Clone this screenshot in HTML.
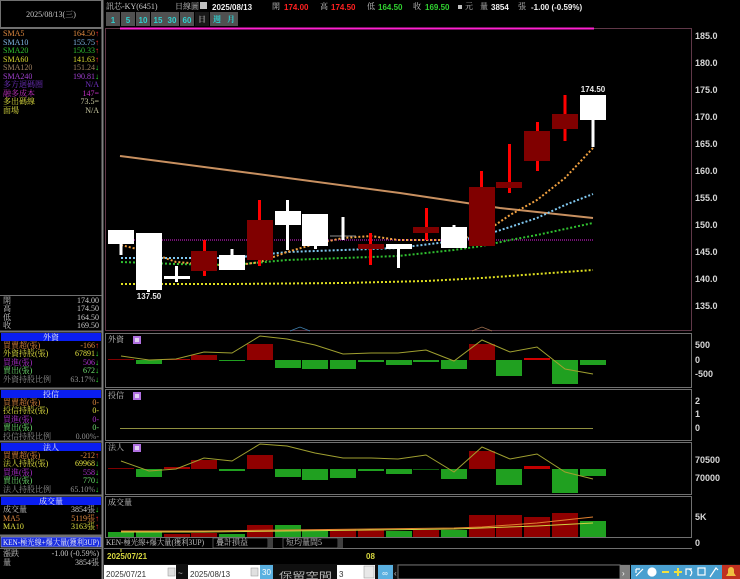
<!DOCTYPE html>
<html><head><meta charset="utf-8"><style>
html,body{margin:0;padding:0;background:#000;width:740px;height:579px;overflow:hidden}
svg{display:block}
text{font-family:"Liberation Sans","Noto Sans CJK TC",sans-serif;font-size:8px}
.s{font-family:"Liberation Serif","Noto Serif CJK SC",serif;font-size:8px}
.ax{fill:#d8d8d8;font-size:9px;font-weight:bold}
</style></head><body>
<svg width="740" height="579" viewBox="0 0 740 579" xmlns="http://www.w3.org/2000/svg">
<rect width="740" height="579" fill="#000"/>
<rect x="0.5" y="0.5" width="101" height="27" fill="none" stroke="#707070"/>
<text x="51" y="17" text-anchor="middle" class="s" fill="#c8c8c8">2025/08/13(三)</text>
<line x1="102.5" y1="0" x2="102.5" y2="579" stroke="#808080" stroke-width="2"/>
<line x1="0" y1="28.5" x2="102" y2="28.5" stroke="#707070"/>
<g class="s">
<text x="3" y="36" fill="#e08a40" class="s">SMA5</text><text x="99" y="36" text-anchor="end" fill="#e08a40" class="s">164.50<tspan fill="#ff3030">↑</tspan></text>
<text x="3" y="45" fill="#80b8e8" class="s">SMA10</text><text x="99" y="45" text-anchor="end" fill="#80b8e8" class="s">155.75<tspan fill="#ff3030">↑</tspan></text>
<text x="3" y="53" fill="#30c030" class="s">SMA20</text><text x="99" y="53" text-anchor="end" fill="#30c030" class="s">150.33<tspan fill="#ff3030">↑</tspan></text>
<text x="3" y="62" fill="#d8d830" class="s">SMA60</text><text x="99" y="62" text-anchor="end" fill="#d8d830" class="s">141.63<tspan fill="#ff3030">↑</tspan></text>
<text x="3" y="70" fill="#a08060" class="s">SMA120</text><text x="99" y="70" text-anchor="end" fill="#a08060" class="s">151.24<tspan fill="#30e030">↓</tspan></text>
<text x="3" y="79" fill="#a040d0" class="s">SMA240</text><text x="99" y="79" text-anchor="end" fill="#a040d0" class="s">190.81<tspan fill="#30e030">↓</tspan></text>
<text x="3" y="87" fill="#7030c0" class="s">多方迴碼圈</text><text x="99" y="87" text-anchor="end" fill="#7030c0" class="s">N/A</text>
<text x="3" y="96" fill="#c030c0" class="s">融多成本</text><text x="99" y="96" text-anchor="end" fill="#c030c0" class="s">147=</text>
<text x="3" y="104" fill="#e0e040" class="s">多出碼線</text><text x="99" y="104" text-anchor="end" fill="#c8c8a0" class="s">73.5=</text>
<text x="3" y="113" fill="#e0e040" class="s">面場</text><text x="99" y="113" text-anchor="end" fill="#c8c8a0" class="s">N/A</text>
</g>
<line x1="0" y1="295.5" x2="102" y2="295.5" stroke="#707070"/>
<text x="3" y="303" fill="#c8c8c8" class="s">開</text><text x="99" y="303" text-anchor="end" fill="#c8c8c8" class="s">174.00</text>
<text x="3" y="311" fill="#c8c8c8" class="s">高</text><text x="99" y="311" text-anchor="end" fill="#c8c8c8" class="s">174.50</text>
<text x="3" y="320" fill="#c8c8c8" class="s">低</text><text x="99" y="320" text-anchor="end" fill="#c8c8c8" class="s">164.50</text>
<text x="3" y="328" fill="#c8c8c8" class="s">收</text><text x="99" y="328" text-anchor="end" fill="#c8c8c8" class="s">169.50</text>
<line x1="0" y1="331.5" x2="102" y2="331.5" stroke="#707070" stroke-width="2"/>
<rect x="1" y="333" width="100" height="8" fill="#0a1ef0"/>
<text x="51" y="340" text-anchor="middle" fill="#f0f0f0" class="s">外資</text>
<text x="3" y="348" fill="#e08a40" class="s">買賣超(張)</text><text x="99" y="348" text-anchor="end" fill="#e08a40" class="s">-166<tspan fill="#ff3030">↑</tspan></text>
<text x="3" y="356" fill="#e0e040" class="s">外資持股(張)</text><text x="99" y="356" text-anchor="end" fill="#e0e040" class="s">67891<tspan fill="#30e030">↓</tspan></text>
<text x="3" y="365" fill="#b030d0" class="s">買進(張)</text><text x="99" y="365" text-anchor="end" fill="#b030d0" class="s">506<tspan fill="#30e030">↓</tspan></text>
<text x="3" y="373" fill="#70e070" class="s">賣出(張)</text><text x="99" y="373" text-anchor="end" fill="#70e070" class="s">672<tspan fill="#30e030">↓</tspan></text>
<text x="3" y="382" fill="#909090" class="s">外資持股比例</text><text x="99" y="382" text-anchor="end" fill="#909090" class="s">63.17%<tspan fill="#30e030">↓</tspan></text>
<line x1="0" y1="388.5" x2="102" y2="388.5" stroke="#707070" stroke-width="2"/>
<rect x="1" y="390" width="100" height="8" fill="#0a1ef0"/>
<text x="51" y="397" text-anchor="middle" fill="#f0f0f0" class="s">投信</text>
<text x="3" y="405" fill="#e08a40" class="s">買賣超(張)</text><text x="99" y="405" text-anchor="end" fill="#e08a40" class="s">0-</text>
<text x="3" y="413" fill="#e0e040" class="s">投信持股(張)</text><text x="99" y="413" text-anchor="end" fill="#e0e040" class="s">0-</text>
<text x="3" y="422" fill="#b030d0" class="s">買進(張)</text><text x="99" y="422" text-anchor="end" fill="#b030d0" class="s">0-</text>
<text x="3" y="430" fill="#70e070" class="s">賣出(張)</text><text x="99" y="430" text-anchor="end" fill="#70e070" class="s">0-</text>
<text x="3" y="439" fill="#909090" class="s">投信持股比例</text><text x="99" y="439" text-anchor="end" fill="#909090" class="s">0.00%-</text>
<line x1="0" y1="441.5" x2="102" y2="441.5" stroke="#707070" stroke-width="2"/>
<rect x="1" y="443" width="100" height="8" fill="#0a1ef0"/>
<text x="51" y="450" text-anchor="middle" fill="#f0f0f0" class="s">法人</text>
<text x="3" y="458" fill="#e08a40" class="s">買賣超(張)</text><text x="99" y="458" text-anchor="end" fill="#e08a40" class="s">-212<tspan fill="#ff3030">↑</tspan></text>
<text x="3" y="466" fill="#e0e040" class="s">法人持股(張)</text><text x="99" y="466" text-anchor="end" fill="#e0e040" class="s">69968<tspan fill="#30e030">↓</tspan></text>
<text x="3" y="475" fill="#b030d0" class="s">買進(張)</text><text x="99" y="475" text-anchor="end" fill="#b030d0" class="s">558<tspan fill="#30e030">↓</tspan></text>
<text x="3" y="483" fill="#70e070" class="s">賣出(張)</text><text x="99" y="483" text-anchor="end" fill="#70e070" class="s">770<tspan fill="#30e030">↓</tspan></text>
<text x="3" y="492" fill="#909090" class="s">法人持股比例</text><text x="99" y="492" text-anchor="end" fill="#909090" class="s">65.10%<tspan fill="#30e030">↓</tspan></text>
<line x1="0" y1="495.5" x2="102" y2="495.5" stroke="#707070" stroke-width="2"/>
<rect x="1" y="497" width="100" height="8" fill="#0a1ef0"/>
<text x="51" y="504" text-anchor="middle" fill="#f0f0f0" class="s">成交量</text>
<text x="3" y="512" fill="#c8c8c8" class="s">成交量</text><text x="99" y="512" text-anchor="end" fill="#c8c8c8" class="s">3854張<tspan fill="#30e030">↓</tspan></text>
<text x="3" y="521" fill="#e08a40" class="s">MA5</text><text x="99" y="521" text-anchor="end" fill="#e08a40" class="s">5119張<tspan fill="#ff3030">↑</tspan></text>
<text x="3" y="529" fill="#e0e040" class="s">MA10</text><text x="99" y="529" text-anchor="end" fill="#e0e040" class="s">3163張<tspan fill="#ff3030">↑</tspan></text>
<line x1="0" y1="535.5" x2="102" y2="535.5" stroke="#707070" stroke-width="2"/>
<rect x="1" y="537" width="100" height="10" fill="#1a2ee0" stroke="#c0c0c0" stroke-width="0.6"/>
<text x="3" y="545" fill="#f0f0f0" class="s" font-size="7.5" textLength="96" lengthAdjust="spacingAndGlyphs">KEN-極光線+爆大量(獲利3UP)</text>
<line x1="0" y1="548.5" x2="102" y2="548.5" stroke="#707070"/>
<text x="3" y="556" fill="#c8c8c8" class="s">漲跌</text><text x="99" y="556" text-anchor="end" fill="#c8c8c8" class="s">-1.00 (-0.59%)</text>
<text x="3" y="565" fill="#c8c8c8" class="s">量</text><text x="99" y="565" text-anchor="end" fill="#c8c8c8" class="s">3854張</text>

<text x="106" y="9" fill="#c8c8c8" class="s">訊芯-KY(6451)</text>
<text x="175" y="9" fill="#c8c8c8" class="s">日線圖</text>
<rect x="200" y="2" width="7" height="7" fill="#c0c0c0"/>
<text x="212" y="10" fill="#f0f0f0" font-size="10" font-weight="bold">2025/08/13</text>
<text x="272" y="9" fill="#c8c8c8" class="s">開</text>
<text x="284" y="10" fill="#ff2020" font-size="9.5" font-weight="bold">174.00</text>
<text x="320" y="9" fill="#c8c8c8" class="s">高</text>
<text x="331" y="10" fill="#ff2020" font-size="9.5" font-weight="bold">174.50</text>
<text x="367" y="9" fill="#c8c8c8" class="s">低</text>
<text x="378" y="10" fill="#30d030" font-size="9.5" font-weight="bold">164.50</text>
<text x="413" y="9" fill="#c8c8c8" class="s">收</text>
<text x="425" y="10" fill="#30d030" font-size="9.5" font-weight="bold">169.50</text>
<rect x="458" y="5" width="4" height="4" fill="#c0c0c0"/>
<text x="465" y="9" fill="#c8c8c8" class="s">元</text>
<text x="480" y="9" fill="#c8c8c8" class="s">量</text>
<text x="491" y="10" fill="#f0f0f0" font-size="9.5" font-weight="bold">3854</text>
<text x="518" y="9" fill="#c8c8c8" class="s">張</text>
<text x="531" y="10" fill="#f0f0f0" font-size="9.5" font-weight="bold">-1.00 (-0.59%)</text>
<g font-size="9" font-weight="bold">
<rect x="106" y="12" width="14" height="14" fill="#505050"/><text x="113" y="23" text-anchor="middle" fill="#30d0d0">1</text>
<rect x="121" y="12" width="14" height="14" fill="#505050"/><text x="128" y="23" text-anchor="middle" fill="#30d0d0">5</text>
<rect x="136" y="12" width="14" height="14" fill="#505050"/><text x="143" y="23" text-anchor="middle" fill="#30d0d0">10</text>
<rect x="151" y="12" width="14" height="14" fill="#505050"/><text x="158" y="23" text-anchor="middle" fill="#30d0d0">15</text>
<rect x="165" y="12" width="14" height="14" fill="#505050"/><text x="172" y="23" text-anchor="middle" fill="#30d0d0">30</text>
<rect x="180" y="12" width="14" height="14" fill="#505050"/><text x="187" y="23" text-anchor="middle" fill="#30d0d0">60</text>
<rect x="195" y="12" width="14" height="14" fill="#181818"/><text x="202" y="22" text-anchor="middle" fill="#909090" class="s" font-size="7">日</text>
<rect x="210" y="12" width="14" height="14" fill="#505050"/><text x="217" y="22" text-anchor="middle" fill="#30d0d0" class="s" font-size="7">週</text>
<rect x="224" y="12" width="14" height="14" fill="#505050"/><text x="231" y="22" text-anchor="middle" fill="#30d0d0" class="s" font-size="7">月</text>
</g>

<rect x="105.5" y="28.5" width="586" height="302" fill="none" stroke="#603848"/>
<line x1="120" y1="28.5" x2="594" y2="28.5" stroke="#ff20d0" stroke-width="2"/>
<g class="ax">
<text x="695" y="39" class="ax">185.0</text><text x="695" y="66" class="ax">180.0</text><text x="695" y="93" class="ax">175.0</text>
<text x="695" y="120" class="ax">170.0</text><text x="695" y="147" class="ax">165.0</text><text x="695" y="174" class="ax">160.0</text>
<text x="695" y="201" class="ax">155.0</text><text x="695" y="228" class="ax">150.0</text><text x="695" y="255" class="ax">145.0</text>
<text x="695" y="282" class="ax">140.0</text><text x="695" y="309" class="ax">135.0</text>
</g>
<line x1="120" y1="240" x2="593" y2="240" stroke="#e020e0" stroke-width="1" stroke-dasharray="1,1"/>
<polyline points="120,156 250,173 400,193 500,208 593,218" fill="none" stroke="#c89060" stroke-width="2"/>
<polyline points="121,284 232,284 343,283 426,281 482,278 537,274 593,270" fill="none" stroke="#e0e020" stroke-width="2" stroke-dasharray="2,2"/>
<polyline points="121,262 176,264 232,265 287,260 343,258 398,256 454,250 482,246 510,240 537,235 565,229 593,223" fill="none" stroke="#30c030" stroke-width="2" stroke-dasharray="2,2"/>
<polyline points="121,258 176,258 232,258 287,252 343,250 398,248 454,241 482,236 510,227 537,218 565,205 593,194" fill="none" stroke="#80c8f0" stroke-width="2" stroke-dasharray="2,2"/>
<polyline points="121,245 149,252 176,262 204,264 232,266 260,262 287,252 315,244 343,238 371,236 398,240 426,240 454,240 482,234 510,215 537,200 565,178 593,148" fill="none" stroke="#f0a040" stroke-width="2" stroke-dasharray="2,2"/>
<g>
<rect x="119.5" y="244" width="3" height="11" fill="#fff"/><rect x="108" y="230" width="26" height="14" fill="#fff"/>
<rect x="147" y="289" width="3" height="3" fill="#fff"/><rect x="136" y="233" width="26" height="57" fill="#fff"/>
<rect x="175" y="266" width="3" height="16" fill="#fff"/><rect x="164" y="276" width="26" height="3" fill="#fff"/>
<rect x="203" y="240" width="3" height="36" fill="#ff0000"/><rect x="191" y="251" width="26" height="20" fill="#800000"/>
<rect x="230.5" y="249" width="3" height="7" fill="#fff"/><rect x="219" y="255" width="26" height="15" fill="#fff"/>
<rect x="258" y="200" width="3" height="66" fill="#ff0000"/><rect x="247" y="220" width="26" height="40" fill="#800000"/>
<rect x="286" y="200" width="3" height="50" fill="#fff"/><rect x="275" y="211" width="26" height="14" fill="#fff"/>
<rect x="314" y="245" width="3" height="4" fill="#fff"/><rect x="302" y="214" width="26" height="32" fill="#fff"/>
<rect x="330" y="235.5" width="26" height="1" fill="#909090"/><rect x="341.5" y="217" width="3" height="23" fill="#fff"/>
<rect x="369" y="233" width="3" height="32" fill="#ff0000"/><rect x="358" y="244" width="26" height="5" fill="#800000"/>
<rect x="397" y="249" width="3" height="19" fill="#fff"/><rect x="386" y="244" width="26" height="5" fill="#fff"/>
<rect x="425" y="208" width="3" height="32" fill="#ff0000"/><rect x="413" y="227" width="26" height="6" fill="#800000"/>
<rect x="452.5" y="225" width="3" height="3" fill="#fff"/><rect x="441" y="227" width="26" height="21" fill="#fff"/>
<rect x="480" y="171" width="3" height="17" fill="#ff0000"/><rect x="469" y="187" width="26" height="59" fill="#800000"/>
<rect x="508" y="144" width="3" height="49" fill="#ff0000"/><rect x="496" y="182" width="26" height="6" fill="#800000"/>
<rect x="536" y="122" width="3" height="49" fill="#ff0000"/><rect x="524" y="131" width="26" height="30" fill="#800000"/>
<rect x="563.5" y="95" width="3" height="46" fill="#ff0000"/><rect x="552" y="114" width="26" height="15" fill="#800000"/>
<rect x="591.5" y="120" width="3" height="27" fill="#fff"/><rect x="580" y="95" width="26" height="25" fill="#fff"/>
</g>
<text x="149" y="299" text-anchor="middle" fill="#e8e8e8" font-size="9" font-weight="bold">137.50</text>
<text x="593" y="92" text-anchor="middle" fill="#e8e8e8" font-size="9" font-weight="bold">174.50</text>
<polyline points="290,331 300,327 310,331" fill="none" stroke="#4080b0" stroke-width="0.8"/>
<polyline points="472,331 482,327 492,331" fill="none" stroke="#a07050" stroke-width="0.8"/>

<rect x="105.5" y="333.5" width="586" height="54" fill="none" stroke="#707070"/>
<text x="108" y="342" fill="#c8c8c8" class="s" font-size="7">外資</text>
<rect x="133" y="336" width="8" height="8" fill="#b070e0"/><rect x="135" y="338" width="4" height="4" fill="#e0d0f0"/>
<g>
<rect x="108" y="359" width="26" height="1" fill="#800000"/>
<rect x="136" y="360" width="26" height="4" fill="#20a020"/>
<rect x="164" y="359" width="26" height="1" fill="#a00000"/>
<rect x="191" y="355" width="26" height="5" fill="#900000"/>
<rect x="219" y="360" width="26" height="1" fill="#20a020"/>
<rect x="247" y="344" width="26" height="16" fill="#900000"/>
<rect x="275" y="360" width="26" height="8" fill="#20a020"/>
<rect x="302" y="360" width="26" height="9" fill="#20a020"/>
<rect x="330" y="360" width="26" height="9" fill="#20a020"/>
<rect x="358" y="360" width="26" height="2" fill="#20a020"/>
<rect x="386" y="360" width="26" height="5" fill="#20a020"/>
<rect x="413" y="360" width="26" height="2" fill="#20a020"/>
<rect x="441" y="360" width="26" height="9" fill="#20a020"/>
<rect x="469" y="344" width="26" height="16" fill="#900000"/>
<rect x="496" y="360" width="26" height="16" fill="#20a020"/>
<rect x="524" y="358" width="26" height="2" fill="#d00000"/>
<rect x="552" y="360" width="26" height="24" fill="#20a020"/>
<rect x="580" y="360" width="26" height="5" fill="#20a020"/>
</g>
<polyline points="121,356 149,360 176,359 204,352 232,353 260,336 287,339 315,345 343,354 371,353 398,353 426,350 454,361 482,340 510,352 537,347 565,369 593,374" fill="none" stroke="#a0a030" stroke-width="1"/>
<g class="ax"><text x="695" y="348" class="ax">500</text><text x="695" y="363" class="ax">0</text><text x="695" y="377" class="ax">-500</text></g>

<rect x="105.5" y="389.5" width="586" height="51" fill="none" stroke="#707070"/>
<text x="108" y="398" fill="#c8c8c8" class="s" font-size="7">投信</text>
<rect x="133" y="392" width="8" height="8" fill="#b070e0"/><rect x="135" y="394" width="4" height="4" fill="#e0d0f0"/>
<line x1="120" y1="428.5" x2="593" y2="428.5" stroke="#909040"/>
<g class="ax"><text x="695" y="404" class="ax">2</text><text x="695" y="417" class="ax">1</text><text x="695" y="431" class="ax">0</text></g>

<rect x="105.5" y="442.5" width="586" height="52" fill="none" stroke="#707070"/>
<text x="108" y="450" fill="#c8c8c8" class="s" font-size="7">法人</text>
<rect x="133" y="444" width="8" height="8" fill="#b070e0"/><rect x="135" y="446" width="4" height="4" fill="#e0d0f0"/>
<g>
<rect x="108" y="468" width="26" height="1" fill="#800000"/>
<rect x="136" y="469" width="26" height="8" fill="#20a020"/>
<rect x="164" y="467" width="26" height="2" fill="#a00000"/>
<rect x="191" y="460" width="26" height="9" fill="#900000"/>
<rect x="219" y="469" width="26" height="2" fill="#20a020"/>
<rect x="247" y="455" width="26" height="14" fill="#900000"/>
<rect x="275" y="469" width="26" height="8" fill="#20a020"/>
<rect x="302" y="469" width="26" height="11" fill="#20a020"/>
<rect x="330" y="469" width="26" height="9" fill="#20a020"/>
<rect x="358" y="469" width="26" height="2" fill="#20a020"/>
<rect x="386" y="469" width="26" height="5" fill="#20a020"/>
<rect x="413" y="469" width="26" height="1" fill="#106010"/>
<rect x="441" y="469" width="26" height="10" fill="#20a020"/>
<rect x="469" y="451" width="26" height="18" fill="#900000"/>
<rect x="496" y="469" width="26" height="16" fill="#20a020"/>
<rect x="524" y="466" width="26" height="3" fill="#c00000"/>
<rect x="552" y="469" width="26" height="24" fill="#20a020"/>
<rect x="580" y="469" width="26" height="7" fill="#20a020"/>
</g>
<polyline points="121,461 149,471 176,469 204,458 232,461 260,444 287,446 315,453 343,458 371,458 398,459 426,455 454,472 482,447 510,459 537,454 565,472 593,479" fill="none" stroke="#a0a030" stroke-width="1"/>
<g class="ax"><text x="695" y="463" class="ax">70500</text><text x="695" y="481" class="ax">70000</text></g>

<rect x="105.5" y="496.5" width="586" height="41" fill="none" stroke="#707070"/>
<text x="108" y="505" fill="#c8c8c8" class="s" font-size="7">成交量</text>
<g>
<rect x="108" y="532" width="26" height="5" fill="#20a020"/>
<rect x="136" y="532" width="26" height="5" fill="#20a020"/>
<rect x="164" y="534" width="26" height="3" fill="#900000"/>
<rect x="191" y="533" width="26" height="4" fill="#900000"/>
<rect x="219" y="534" width="26" height="3" fill="#20a020"/>
<rect x="247" y="525" width="26" height="12" fill="#900000"/>
<rect x="275" y="525" width="26" height="12" fill="#20a020"/>
<rect x="302" y="530" width="26" height="7" fill="#20a020"/>
<rect x="330" y="529" width="26" height="8" fill="#900000"/>
<rect x="358" y="530" width="26" height="7" fill="#900000"/>
<rect x="386" y="531" width="26" height="6" fill="#20a020"/>
<rect x="413" y="530" width="26" height="7" fill="#900000"/>
<rect x="441" y="530" width="26" height="7" fill="#20a020"/>
<rect x="469" y="515" width="26" height="22" fill="#900000"/>
<rect x="496" y="515" width="26" height="22" fill="#900000"/>
<rect x="524" y="517" width="26" height="20" fill="#900000"/>
<rect x="552" y="513" width="26" height="24" fill="#900000"/>
<rect x="580" y="521" width="26" height="16" fill="#20a020"/>
</g>
<polyline points="121,531 204,531 287,530 370,529 454,528 482,527 537,523 593,517" fill="none" stroke="#e08030" stroke-width="1"/>
<polyline points="121,532 204,532 287,531 370,530 454,529 482,528 537,526 593,523" fill="none" stroke="#d0d040" stroke-width="1"/>
<g class="ax"><text x="695" y="520" class="ax">5K</text><text x="695" y="546" class="ax">0</text></g>

<rect x="104" y="538" width="588" height="10" fill="#000"/>
<text x="106" y="545" fill="#c8c8c8" class="s" font-size="7.5" textLength="98" lengthAdjust="spacingAndGlyphs">KEN-極光線+爆大量(獲利3UP)</text>
<rect x="213" y="538" width="55" height="10" fill="#000" stroke="#808080" stroke-width="0.6"/><text x="216" y="545" fill="#c8c8c8" class="s" font-size="7">疊計損益</text>
<rect x="268" y="538" width="5" height="10" fill="#404040"/>
<rect x="283" y="538" width="55" height="10" fill="#000" stroke="#808080" stroke-width="0.6"/><text x="286" y="545" fill="#c8c8c8" class="s" font-size="7">短均量間5</text>
<rect x="338" y="538" width="5" height="10" fill="#404040"/>
<line x1="104" y1="548.5" x2="692" y2="548.5" stroke="#707070"/>
<line x1="121" y1="549" x2="121" y2="552" stroke="#d0d040"/>
<text x="107" y="559" fill="#d8d840" font-size="9" font-weight="bold">2025/07/21</text>
<text x="366" y="559" fill="#d8d840" font-size="8" font-weight="bold">08</text>

<rect x="104" y="564" width="636" height="15" fill="#101010"/>
<rect x="104" y="565" width="72" height="14" fill="#fff"/>
<text x="106" y="577" fill="#303030" font-size="12">2025/07/21</text>
<rect x="168" y="568" width="7" height="8" fill="#e0e0e0" stroke="#909090" stroke-width="0.5"/>
<text x="178" y="576" fill="#c8c8c8" font-size="10">~</text>
<rect x="188" y="565" width="72" height="14" fill="#fff"/>
<text x="190" y="577" fill="#303030" font-size="12">2025/08/13</text>
<rect x="251" y="568" width="7" height="8" fill="#e0e0e0" stroke="#909090" stroke-width="0.5"/>
<rect x="260" y="565" width="13" height="14" fill="#5ab0e0"/>
<text x="266.5" y="575" text-anchor="middle" fill="#fff" font-size="7">30</text>
<text x="279" y="578" fill="#b8b8b8" font-size="15" font-family="'Noto Sans CJK TC',sans-serif" textLength="53" lengthAdjust="spacingAndGlyphs">保留空間</text>
<rect x="337" y="565" width="38" height="14" fill="#fff"/>
<text x="339" y="577" fill="#303030" font-size="12">3</text>
<rect x="364" y="566" width="10" height="12" fill="#e8e8e8" stroke="#909090" stroke-width="0.5"/>
<rect x="378" y="565" width="15" height="14" fill="#5ab0e0"/>
<text x="385" y="576" text-anchor="middle" fill="#fff" font-size="8">∞</text>
<text x="394" y="576" fill="#c8c8c8" font-size="9">‹</text>
<rect x="398" y="565" width="222" height="14" fill="#000" stroke="#707070"/>
<rect x="620" y="565" width="10" height="14" fill="#808080"/>
<text x="622" y="576" fill="#fff" font-size="9">›</text>
<rect x="631" y="565" width="91" height="14" fill="#4aa0d0"/>
<g fill="none" stroke="#fff" stroke-width="1.2">
<path d="M636 576 L643 569 M636 569 L636 573 M636 569 L640 569"/>
<circle cx="652" cy="572" r="4" fill="#fff"/>
<path d="M662 572 H669" stroke="#f0e040" stroke-width="2"/>
<path d="M674 572 H682 M678 568 V576" stroke="#f0e040" stroke-width="2"/>
<path d="M686 575 L686 569 L692 569 M689 569 Q694 572 690 576"/>
<rect x="698" y="568" width="7" height="7"/>
<path d="M710 577 L716 568 L718 570"/>
</g>
<rect x="722" y="565" width="18" height="14" fill="#c03020"/>
<path d="M726 576 H736 L734 573 V570 A3 3 0 0 0 728 570 V573 Z" fill="#f0c040"/>
</svg>
</body></html>
